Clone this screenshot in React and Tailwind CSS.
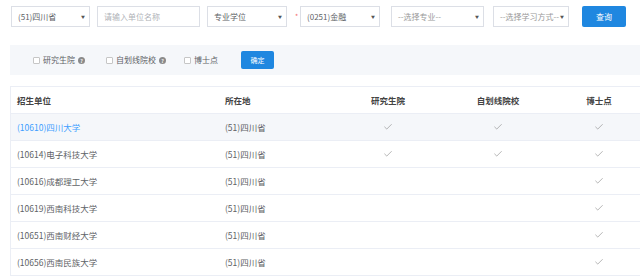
import { Check } from "lucide-react";

const FONT = { fontFamily: '"Microsoft YaHei", "Noto Sans CJK SC", "Liberation Sans", sans-serif' };

const rows = [
  { name: "(10610)四川大学", loc: "(51)四川省", yjs: true, zhx: true, bsd: true, link: true },
  { name: "(10614)电子科技大学", loc: "(51)四川省", yjs: true, zhx: true, bsd: true },
  { name: "(10616)成都理工大学", loc: "(51)四川省", bsd: true },
  { name: "(10619)西南科技大学", loc: "(51)四川省", bsd: true },
  { name: "(10651)西南财经大学", loc: "(51)四川省", bsd: true },
  { name: "(10656)西南民族大学", loc: "(51)四川省", bsd: true },
];

function Select({ label, width, placeholder }) {
  return (
    <div
      className={`flex h-[21px] items-center justify-between whitespace-nowrap border border-[#dcdfe6] bg-white pl-[6px] pr-[4px] text-[8px] ${width} ${
        placeholder ? "text-[#999]" : "text-[#606266]"
      }`}
    >
      <span>{label}</span>
      <span className="text-[4px] text-[#555]">▼</span>
    </div>
  );
}

function Tick() {
  return <Check size={10} strokeWidth={1.3} className="text-[#777]" />;
}

function Box() {
  return <span className="inline-block h-[7px] w-[7px] shrink-0 rounded-[1px] border border-[#c6c6c6] bg-white" />;
}

function Help() {
  return (
    <span className="ml-[3px] flex h-[7px] w-[7px] items-center justify-center rounded-full bg-[#8a8a8a] text-[5px] font-bold leading-none text-white">
      ?
    </span>
  );
}

export default function App() {
  return (
    <div className="h-[277px] w-[640px] overflow-hidden bg-white" style={FONT}>
      <div className="flex items-center pl-[11px] pt-[6px]">
        <Select label="(51)四川省" width="w-[79px]" />
        <div className="ml-[7px] flex h-[21px] w-[103px] items-center border border-[#dcdfe6] pl-[6px] text-[8px] text-[#b0b3b8]">
          请输入单位名称
        </div>
        <div className="ml-[7px]">
          <Select label="专业学位" width="w-[80px]" />
        </div>
        <span className="w-[13px] pl-[8px] text-[7px] text-[#f56c6c]">*</span>
        <Select label="(0251)金融" width="w-[80px]" />
        <div className="ml-[11px]">
          <Select label="--选择专业--" width="w-[93px]" placeholder />
        </div>
        <div className="ml-[9px]">
          <Select label="--选择学习方式--" width="w-[76px]" placeholder />
        </div>
        <button className="ml-[13px] flex h-[21px] w-[44px] items-center justify-center rounded-[2px] bg-[#1f87e0] text-[8px] text-white">
          查询
        </button>
      </div>

      <div className="ml-[10px] mt-[18px] flex h-[30px] items-center bg-[#f5f7fa] pl-[23px] text-[8px] text-[#606266]">
        <Box />
        <span className="ml-[3px]">研究生院</span>
        <Help />
        <span className="ml-[21px] flex">
          <Box />
        </span>
        <span className="ml-[3px]">自划线院校</span>
        <Help />
        <span className="ml-[18px] flex">
          <Box />
        </span>
        <span className="ml-[3px]">博士点</span>
        <button className="ml-[23px] flex h-[18px] w-[33px] items-center justify-center rounded-[2px] bg-[#1f87e0] text-[7px] text-white">
          确定
        </button>
      </div>

      <div className="ml-[10px] mt-[11px] w-[640px] border-l border-t border-[#ebeef5] text-[8.5px] text-[#606266]">
        <div className="flex h-[27px] items-center border-b border-[#ebeef5] font-bold text-[#444]">
          <div className="w-[208px] pl-[6px]">招生单位</div>
          <div className="w-[114px] pl-[6px]">所在地</div>
          <div className="w-[110px] text-center">研究生院</div>
          <div className="w-[110px] text-center">自划线院校</div>
          <div className="w-[92px] text-center">博士点</div>
        </div>
        {rows.map((r, i) => (
          <div
            key={r.name}
            className={`flex h-[27px] items-center border-b border-[#ebeef5] ${i === 0 ? "bg-[#f5f7fa]" : ""}`}
          >
            <div className={`w-[208px] pl-[6px] ${r.link ? "text-[#409eff]" : ""}`}>{r.name}</div>
            <div className="w-[114px] pl-[6px]">{r.loc}</div>
            <div className="flex w-[110px] justify-center">{r.yjs && <Tick />}</div>
            <div className="flex w-[110px] justify-center">{r.zhx && <Tick />}</div>
            <div className="flex w-[92px] justify-center">{r.bsd && <Tick />}</div>
          </div>
        ))}
      </div>
    </div>
  );
}
